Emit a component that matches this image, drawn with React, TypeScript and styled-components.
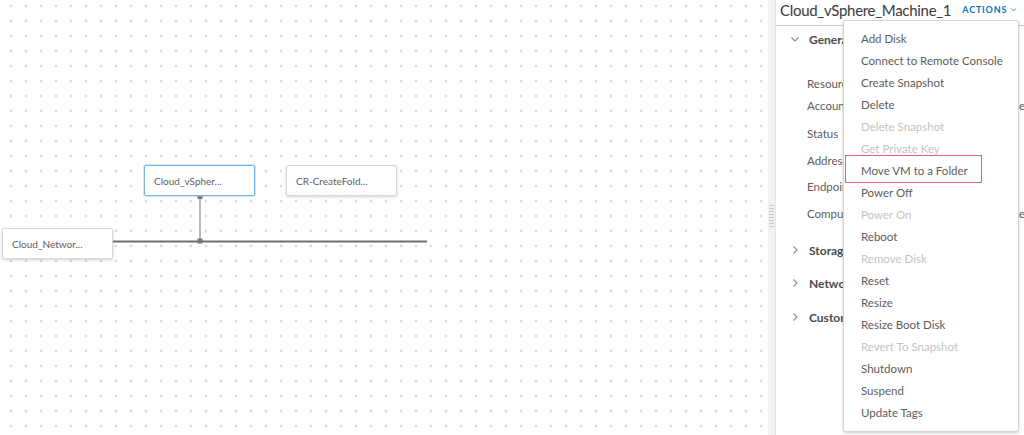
import React from 'react';
import styled, { createGlobalStyle, css } from 'styled-components';

const GlobalStyle = createGlobalStyle`
  html, body {
    margin: 0;
    padding: 0;
    overflow: hidden;
    background: #ffffff;
  }
  body {
    font-family: Lato, "Open Sans", "Liberation Sans", sans-serif;
    color: #565656;
  }
`;

const Page = styled.div`
  display: flex;
  width: 1024px;
  height: 435px;
  overflow: hidden;
`;

/* ---------- canvas ---------- */

const Canvas = styled.div`
  position: relative;
  width: 768px;
  height: 100%;
  background-color: #ffffff;
  background-image: radial-gradient(circle, #b4b4b4 0.9px, transparent 1.1px);
  background-size: 15px 15px;
  background-position: 3.5px -1.5px;
`;

const Node = styled.div<{ $selected?: boolean }>`
  position: absolute;
  box-sizing: border-box;
  width: 111px;
  height: 31px;
  display: flex;
  align-items: center;
  padding-left: 9px;
  background: #ffffff;
  border: 1px solid ${(p) => (p.$selected ? '#7ab4e3' : '#d8d8d8')};
  border-radius: 2px;
  box-shadow: ${(p) =>
    p.$selected ? '0 0 0 1px rgba(122,180,227,0.35)' : '0 1px 3px rgba(0,0,0,0.18)'};
  font-size: 10px;
  color: #606060;
  white-space: nowrap;
`;

const Wires = styled.svg`
  position: absolute;
  left: 0;
  top: 0;
  pointer-events: none;
`;

/* ---------- splitter ---------- */

const Splitter = styled.div`
  width: 7px;
  height: 100%;
  background: #f2f2f2;
  border-right: 1px solid #e4e4e4;
  display: flex;
  align-items: center;
  justify-content: center;
`;

const Grip = styled.div`
  width: 5px;
  height: 24px;
  margin-top: -3px;
  background-image: radial-gradient(circle, #c4c4c4 0.8px, transparent 1px);
  background-size: 2.5px 3px;
`;

/* ---------- side panel ---------- */

const Panel = styled.div`
  position: relative;
  flex: 1;
  display: flex;
  flex-direction: column;
  overflow: hidden;
`;

const Header = styled.div`
  height: 25px;
  display: flex;
  align-items: center;
  gap: 11px;
  padding-left: 4px;
  border-bottom: 1px solid #cccccc;
  white-space: nowrap;
`;

const Title = styled.div`
  font-size: 15px;
  letter-spacing: -0.3px;
  font-weight: 400;
  color: #3a3a3a;
  margin-top: -5px;
`;

const ActionsButton = styled.div`
  display: flex;
  align-items: center;
  gap: 3px;
  margin-top: -6px;
  font-size: 9px;
  font-weight: 700;
  letter-spacing: 0.09em;
  color: #0079b8;
`;

const Body = styled.div`
  padding-left: 14px;
  display: flex;
  flex-direction: column;
`;

const SectionHead = styled.div<{ $top?: number }>`
  height: 26px;
  margin-top: ${(p) => p.$top ?? 0}px;
  display: flex;
  align-items: center;
  gap: 9px;
  font-size: 12px;
  font-weight: 700;
  color: #4a4a4a;
  white-space: nowrap;
`;

const Fields = styled.div`
  margin-top: 20px;
  padding-left: 17px;
  display: flex;
  flex-direction: column;
`;

const Field = styled.div<{ $top?: number }>`
  height: 22px;
  margin-top: ${(p) => p.$top ?? 0}px;
  display: grid;
  grid-template-columns: 212px auto;
  align-items: center;
  font-size: 11.5px;
  color: #5c5c5c;
  white-space: nowrap;
`;

/* ---------- dropdown ---------- */

const Menu = styled.div`
  position: absolute;
  left: 67px;
  top: 20px;
  width: 176px;
  box-sizing: border-box;
  padding: 6px 0 8px;
  background: #ffffff;
  border: 1px solid #d4d4d4;
  border-radius: 3px;
  box-shadow: 0 1px 3px rgba(0, 0, 0, 0.2);
`;

const MenuItem = styled.div<{ $disabled?: boolean; $marked?: boolean }>`
  position: relative;
  height: 22px;
  display: flex;
  align-items: center;
  padding-left: 17px;
  font-size: 11.5px;
  color: ${(p) => (p.$disabled ? '#c4c4c4' : '#5c5c5c')};
  white-space: nowrap;
  ${(p) =>
    p.$marked &&
    css`
      &::after {
        content: '';
        position: absolute;
        left: 1px;
        top: -4px;
        width: 137px;
        height: 28px;
        box-sizing: border-box;
        border: 1px solid #e2646e;
      }
    `}
`;

const Chevron = ({ dir, size = 10, color = '#8a8a8a' }: { dir: 'down' | 'right'; size?: number; color?: string }) => (
  <svg width={size} height={size} viewBox="0 0 10 10" fill="none">
    {dir === 'down' ? (
      <path d="M1.5 3.5 L5 7 L8.5 3.5" stroke={color} strokeWidth="1.1" />
    ) : (
      <path d="M3.5 1.5 L7 5 L3.5 8.5" stroke={color} strokeWidth="1.1" />
    )}
  </svg>
);

const menuItems: { label: string; disabled?: boolean; marked?: boolean }[] = [
  { label: 'Add Disk' },
  { label: 'Connect to Remote Console' },
  { label: 'Create Snapshot' },
  { label: 'Delete' },
  { label: 'Delete Snapshot', disabled: true },
  { label: 'Get Private Key', disabled: true },
  { label: 'Move VM to a Folder', marked: true },
  { label: 'Power Off' },
  { label: 'Power On', disabled: true },
  { label: 'Reboot' },
  { label: 'Remove Disk', disabled: true },
  { label: 'Reset' },
  { label: 'Resize' },
  { label: 'Resize Boot Disk' },
  { label: 'Revert To Snapshot', disabled: true },
  { label: 'Shutdown' },
  { label: 'Suspend' },
  { label: 'Update Tags' },
];

const fields = [
  { label: 'Resource name', value: '', top: 0 },
  { label: 'Account / region', value: 'er', top: 0 },
  { label: 'Status', value: '', top: 6 },
  { label: 'Address', value: '', top: 5 },
  { label: 'Endpoint', value: '', top: 4 },
  { label: 'Compute host', value: 'e', top: 5 },
];

export default function App() {
  return (
    <>
      <GlobalStyle />
      <Page>
        <Canvas>
          <Wires width="768" height="435">
            <line x1="200" y1="196" x2="200" y2="241" stroke="#8a8a8a" strokeWidth="1.2" />
            <line x1="113" y1="241.5" x2="427" y2="241.5" stroke="#6e6e6e" strokeWidth="2" />
            <rect x="197.5" y="194" width="5" height="5" fill="#777" />
            <rect x="197.5" y="238.5" width="5" height="5" fill="#777" />
          </Wires>
          <Node $selected style={{ left: 144, top: 165 }}>Cloud_vSpher...</Node>
          <Node style={{ left: 286, top: 165 }}>CR-CreateFold...</Node>
          <Node style={{ left: 2, top: 228 }}>Cloud_Networ...</Node>
        </Canvas>

        <Splitter>
          <Grip />
        </Splitter>

        <Panel>
          <Header>
            <Title>Cloud_vSphere_Machine_1</Title>
            <ActionsButton>
              ACTIONS
              <Chevron dir="down" size={7} color="#0079b8" />
            </ActionsButton>
          </Header>

          <Body>
            <SectionHead>
              <Chevron dir="down" />
              General
            </SectionHead>
            <Fields>
              {fields.map((f) => (
                <Field key={f.label} $top={f.top}>
                  <span>{f.label}</span>
                  <span>{f.value}</span>
                </Field>
              ))}
            </Fields>
            <SectionHead $top={13}>
              <Chevron dir="right" />
              Storage
            </SectionHead>
            <SectionHead $top={7}>
              <Chevron dir="right" />
              Network
            </SectionHead>
            <SectionHead $top={8}>
              <Chevron dir="right" />
              Custom properties
            </SectionHead>
          </Body>

          <Menu>
            {menuItems.map((m) => (
              <MenuItem key={m.label} $disabled={m.disabled} $marked={m.marked}>
                {m.label}
              </MenuItem>
            ))}
          </Menu>
        </Panel>
      </Page>
    </>
  );
}
